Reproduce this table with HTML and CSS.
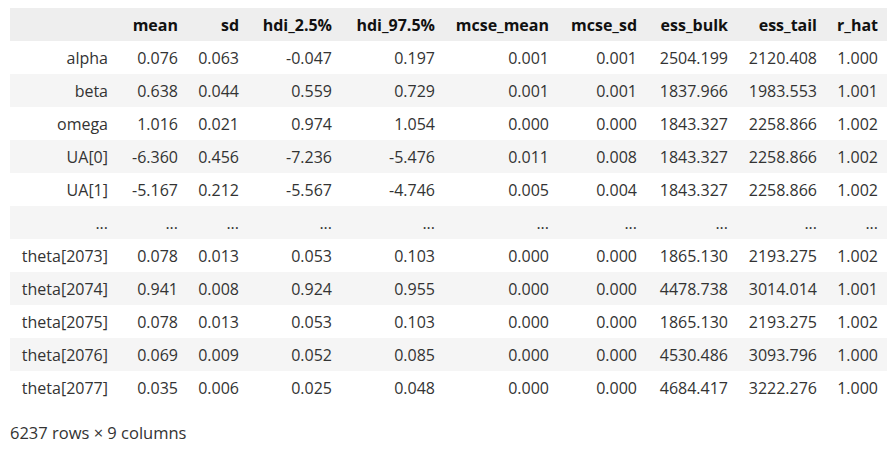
FILE: index.html
```html
<!DOCTYPE html>
<html>
<head>
<meta charset="utf-8">
<link rel="stylesheet" href="styles.css">
</head>
<body>
<div class="output">
<table class="dataframe">
<colgroup>
<col class="c-idx"><col class="c-mean"><col class="c-sd"><col class="c-h25"><col class="c-h975"><col class="c-mm"><col class="c-ms"><col class="c-eb"><col class="c-et"><col class="c-rh">
</colgroup>
<thead>
<tr><th></th><th>mean</th><th>sd</th><th>hdi_2.5%</th><th>hdi_97.5%</th><th>mcse_mean</th><th>mcse_sd</th><th>ess_bulk</th><th>ess_tail</th><th>r_hat</th></tr>
</thead>
<tbody>
<tr><th>alpha</th><td>0.076</td><td>0.063</td><td>-0.047</td><td>0.197</td><td>0.001</td><td>0.001</td><td>2504.199</td><td>2120.408</td><td>1.000</td></tr>
<tr><th>beta</th><td>0.638</td><td>0.044</td><td>0.559</td><td>0.729</td><td>0.001</td><td>0.001</td><td>1837.966</td><td>1983.553</td><td>1.001</td></tr>
<tr><th>omega</th><td>1.016</td><td>0.021</td><td>0.974</td><td>1.054</td><td>0.000</td><td>0.000</td><td>1843.327</td><td>2258.866</td><td>1.002</td></tr>
<tr><th>UA[0]</th><td>-6.360</td><td>0.456</td><td>-7.236</td><td>-5.476</td><td>0.011</td><td>0.008</td><td>1843.327</td><td>2258.866</td><td>1.002</td></tr>
<tr><th>UA[1]</th><td>-5.167</td><td>0.212</td><td>-5.567</td><td>-4.746</td><td>0.005</td><td>0.004</td><td>1843.327</td><td>2258.866</td><td>1.002</td></tr>
<tr><th>...</th><td>...</td><td>...</td><td>...</td><td>...</td><td>...</td><td>...</td><td>...</td><td>...</td><td>...</td></tr>
<tr><th>theta[2073]</th><td>0.078</td><td>0.013</td><td>0.053</td><td>0.103</td><td>0.000</td><td>0.000</td><td>1865.130</td><td>2193.275</td><td>1.002</td></tr>
<tr><th>theta[2074]</th><td>0.941</td><td>0.008</td><td>0.924</td><td>0.955</td><td>0.000</td><td>0.000</td><td>4478.738</td><td>3014.014</td><td>1.001</td></tr>
<tr><th>theta[2075]</th><td>0.078</td><td>0.013</td><td>0.053</td><td>0.103</td><td>0.000</td><td>0.000</td><td>1865.130</td><td>2193.275</td><td>1.002</td></tr>
<tr><th>theta[2076]</th><td>0.069</td><td>0.009</td><td>0.052</td><td>0.085</td><td>0.000</td><td>0.000</td><td>4530.486</td><td>3093.796</td><td>1.000</td></tr>
<tr><th>theta[2077]</th><td>0.035</td><td>0.006</td><td>0.025</td><td>0.048</td><td>0.000</td><td>0.000</td><td>4684.417</td><td>3222.276</td><td>1.000</td></tr>
</tbody>
</table>
<p class="shape">6237 rows × 9 columns</p>
</div>
</body>
</html>
```
FILE: styles.css
```css
html, body {
  margin: 0;
  padding: 0;
  background: #ffffff;
}
body {
  font-family: "Open Sans", "Noto Sans", sans-serif;
  font-size: 16px;
  color: #333333;
}
.output {
  padding: 8px 0 0 10px;
}
.dataframe {
  border-collapse: collapse;
  border-spacing: 0;
  table-layout: fixed;
  width: 877px;
}
.c-idx { width: 107px; }
.c-mean { width: 70px; }
.c-sd { width: 61px; }
.c-h25 { width: 93px; }
.c-h975 { width: 103px; }
.c-mm { width: 114px; }
.c-ms { width: 88px; }
.c-eb { width: 91px; }
.c-et { width: 89px; }
.c-rh { width: 61px; }
.dataframe th,
.dataframe td {
  height: 33px;
  padding: 1px 9px 0 0;
  text-align: right;
  vertical-align: middle;
  white-space: nowrap;
  line-height: 32px;
  box-sizing: border-box;
}
.dataframe thead th {
  font-weight: 700;
  color: #111111;
  background: #eeeeee;
}
.dataframe tbody th {
  font-weight: 400;
  color: #333333;
}
.dataframe tbody tr:nth-child(even) {
  background: #f5f5f5;
}
.shape {
  margin: 17px 0 0 0;
  font-size: 16.5px;
  line-height: 24px;
  color: #333333;
}
```
